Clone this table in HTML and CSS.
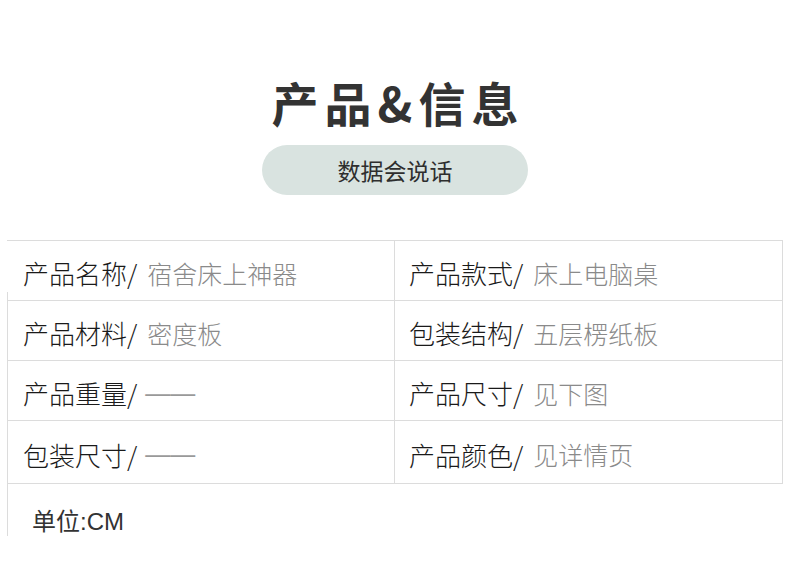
FILE: index.html
```html
<!DOCTYPE html>
<html lang="zh">
<head>
<meta charset="utf-8">
<title>产品&amp;信息</title>
<link rel="stylesheet" href="styles.css">
</head>
<body>
<div class="page">
  <header class="head">
    <h1 class="title">产品&amp;信息</h1>
    <div class="pill">数据会说话</div>
  </header>
  <section class="spec">
    <div class="grid">
      <div class="cell left first"><span class="label">产品名称/</span><span class="value">宿舍床上神器</span></div>
      <div class="cell right"><span class="label">产品款式/</span><span class="value">床上电脑桌</span></div>
      <div class="cell left"><span class="label">产品材料/</span><span class="value">密度板</span></div>
      <div class="cell right"><span class="label">包装结构/</span><span class="value">五层楞纸板</span></div>
      <div class="cell left"><span class="label">产品重量/</span><span class="value dash">——</span></div>
      <div class="cell right"><span class="label">产品尺寸/</span><span class="value">见下图</span></div>
      <div class="cell left last"><span class="label">包装尺寸/</span><span class="value dash">——</span></div>
      <div class="cell right last"><span class="label">产品颜色/</span><span class="value">见详情页</span></div>
    </div>
    <div class="foot">单位:CM</div>
  </section>
</div>
</body>
</html>
```

FILE: styles.css
```css
html, body {
  margin: 0;
  padding: 0;
  background: #ffffff;
}
body {
  font-family: "Noto Sans CJK SC", "Noto Sans", sans-serif;
  color: #222;
}
.page {
  width: 790px;
  height: 577px;
  overflow: hidden;
}
.head {
  display: flex;
  flex-direction: column;
  align-items: center;
  padding-top: 78px;
}
.title {
  margin: 0;
  font-size: 47px;
  line-height: 47px;
  font-weight: 700;
  color: #333333;
  letter-spacing: 6px;
  padding-left: 6px;
}
.pill {
  margin-top: 20px;
  width: 266px;
  height: 50px;
  border-radius: 25px;
  background: #d9e3e0;
  color: #2e2e2e;
  font-size: 23px;
  font-weight: 400;
  display: flex;
  align-items: center;
  justify-content: center;
}
.spec {
  margin: 45px 0 0 7px;
  width: 776px;
}
.grid {
  display: grid;
  grid-template-columns: 388px 388px;
  grid-template-rows: 60px 60px 60px 63px;
  border-top: 1px solid #dcdcdc;
  box-sizing: border-box;
}
.cell {
  display: flex;
  align-items: center;
  box-sizing: border-box;
  border-bottom: 1px solid #dcdcdc;
  padding: 5px 0 0 15px;
  white-space: nowrap;
}
.cell.left {
  border-left: 1px solid #dcdcdc;
  border-right: 1px solid #dcdcdc;
}
.cell.right {
  border-right: 1px solid #dcdcdc;
  padding-left: 14px;
}
.cell.left.first {
  border-left: 1px solid transparent;
  background-image: linear-gradient(#dcdcdc, #dcdcdc);
  background-repeat: no-repeat;
  background-size: 1px 9px;
  background-position: left bottom;
  background-origin: border-box;
}
.label {
  font-size: 26px;
  font-weight: 200;
  color: #1a1a1a;
  line-height: 1;
}
.value {
  margin-left: 10px;
  font-size: 25px;
  font-weight: 200;
  color: #8a8a8a;
  line-height: 1;
}
.value.dash {
  margin-left: 8px;
  font-family: "Liberation Sans", sans-serif;
  font-size: 25px;
  color: #999;
}
.foot {
  height: 52px;
  box-sizing: border-box;
  border-left: 1px solid #dcdcdc;
  padding: 25px 0 0 24px;
  font-family: "Liberation Sans", "Noto Sans CJK SC", sans-serif;
  font-size: 24px;
  line-height: 26px;
  font-weight: 400;
  color: #333;
}
```
